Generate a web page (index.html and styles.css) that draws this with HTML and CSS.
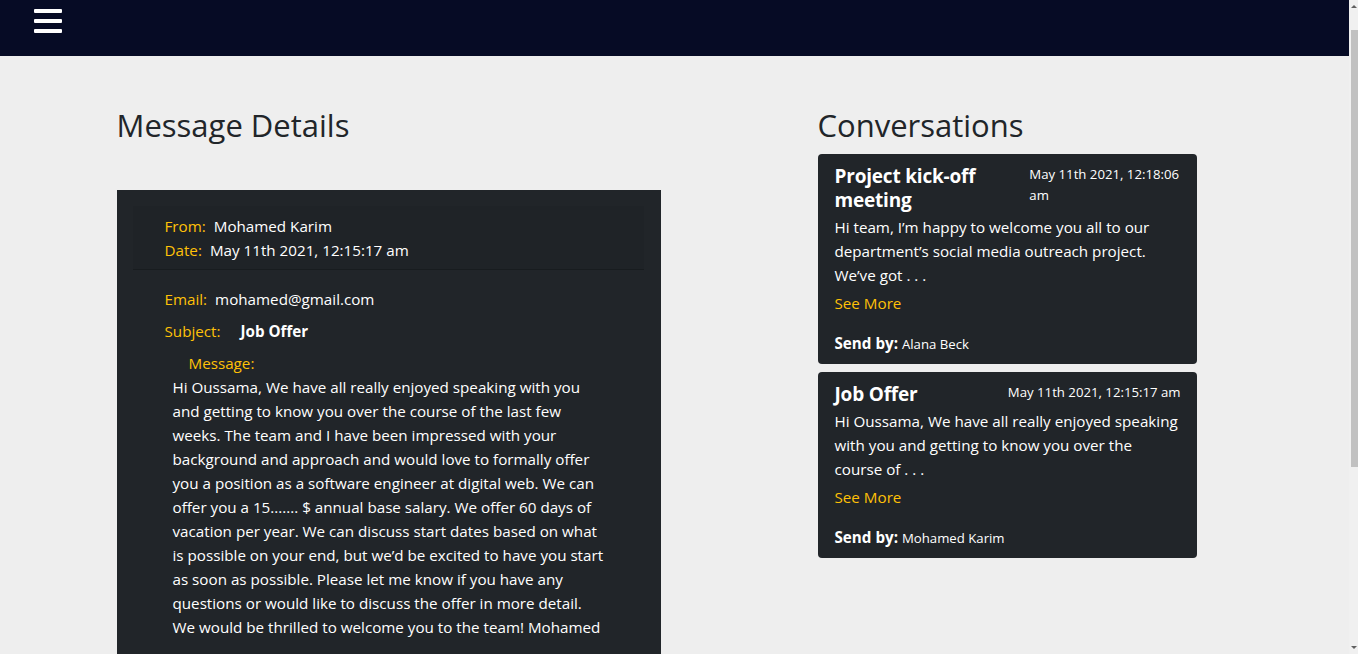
FILE: index.html
```html
<!DOCTYPE html>
<html lang="en">
<head>
<meta charset="utf-8">
<title>Message Details</title>
<link rel="stylesheet" href="styles.css">
</head>
<body>
<div class="page">
  <nav class="navbar">
    <button class="burger" aria-label="Menu">
      <span></span><span></span><span></span>
    </button>
  </nav>
  <main class="container">
    <section class="col-left">
      <h2 class="page-title title-details">Message Details</h2>
      <div class="msg-card">
        <div class="msg-header">
          <div class="field"><span class="label">From:</span><span class="value">Mohamed Karim</span></div>
          <div class="field"><span class="label">Date:</span><span class="value">May 11th 2021, 12:15:17 am</span></div>
        </div>
        <div class="msg-body">
          <div class="field row-gap"><span class="label">Email:</span><span class="value">mohamed@gmail.com</span></div>
          <div class="field row-gap"><span class="label">Subject:</span><span class="value subject">Job Offer</span></div>
          <div class="label msg-label">Message:</div>
          <p class="msg-text">Hi Oussama, We have all really enjoyed speaking with you and getting to know you over the course of the last few weeks. The team and I have been impressed with your background and approach and would love to formally offer you a position as a software engineer at digital web. We can offer you a 15....... $ annual base salary. We offer 60 days of vacation per year. We can discuss start dates based on what is possible on your end, but we’d be excited to have you start as soon as possible. Please let me know if you have any questions or would like to discuss the offer in more detail. We would be thrilled to welcome you to the team! Mohamed</p>
        </div>
      </div>
    </section>
    <section class="col-right">
      <h2 class="page-title title-conv">Conversations</h2>
      <article class="conv-card">
        <div class="conv-head">
          <h5 class="conv-title">Project kick-off meeting</h5>
          <span class="conv-date">May 11th 2021, 12:18:06 am</span>
        </div>
        <p class="conv-text">Hi team, I’m happy to welcome you all to our department’s social media outreach project. We’ve got . . .</p>
        <a class="see-more" href="#">See More</a>
        <div class="sender"><strong>Send by:</strong> <span>Alana Beck</span></div>
      </article>
      <article class="conv-card">
        <div class="conv-head">
          <h5 class="conv-title">Job Offer</h5>
          <span class="conv-date">May 11th 2021, 12:15:17 am</span>
        </div>
        <p class="conv-text">Hi Oussama, We have all really enjoyed speaking with you and getting to know you over the course of . . .</p>
        <a class="see-more" href="#">See More</a>
        <div class="sender"><strong>Send by:</strong> <span>Mohamed Karim</span></div>
      </article>
    </section>
  </main>
</div>
<aside class="scrollbar" aria-hidden="true">
  <span class="arrow arrow-up"></span>
  <span class="thumb"></span>
  <span class="arrow arrow-down"></span>
</aside>
</body>
</html>
```
FILE: styles.css
```css
* { box-sizing: border-box; }

body {
  margin: 0;
  display: flex;
  align-items: flex-start;
  background: #eeeeee;
  font-family: "Open Sans", "Noto Sans", sans-serif;
  font-size: 15.2px;
  line-height: 24px;
  color: #212529;
}

.page {
  flex: 1;
  min-width: 0;
}

/* window scrollbar */
.scrollbar {
  flex: 0 0 9px;
  position: sticky;
  top: 0;
  height: 100vh;
  background: #f0f0f0;
  display: flex;
  flex-direction: column;
  align-items: flex-end;
}
.arrow {
  display: block;
  width: 0;
  height: 0;
  border-left: 3px solid transparent;
  border-right: 3px solid transparent;
  margin-right: 1px;
}
.arrow-up {
  margin-top: 5px;
  border-bottom: 3px solid #606060;
}
.arrow-down {
  margin-top: auto;
  margin-bottom: 5px;
  border-top: 3px solid #606060;
}
.thumb {
  display: block;
  width: 7px;
  height: 437px;
  margin-top: 22px;
  background: #c1c1c1;
}

.navbar {
  height: 56px;
  background: #060b25;
  display: flex;
  align-items: flex-start;
  padding: 9px 0 0 34px;
}

.burger {
  display: flex;
  flex-direction: column;
  gap: 6px;
  padding: 0;
  border: 0;
  background: none;
  cursor: pointer;
}
.burger span {
  display: block;
  width: 28px;
  height: 4px;
  border-radius: 1px;
  background: #ffffff;
}

.container {
  width: 1140px;
  margin: 0 auto;
  padding: 50px 12px 240px;
  display: grid;
  grid-template-columns: 544px 379px;
  column-gap: 157px;
  align-items: start;
}

.page-title {
  margin: 0;
  font-size: 31px;
  line-height: 38px;
  font-weight: 500;
  color: #212529;
}
.title-details { margin-bottom: 46px; }
.title-conv { margin-bottom: 10px; }

.msg-card {
  background: #212529;
  color: #ffffff;
  padding: 16px 17px 16px 16px;
}

.msg-header {
  padding: 8px 32px 7px;
  background: rgba(0, 0, 0, 0.03);
  border-bottom: 1px solid rgba(0, 0, 0, 0.2);
}

.field { display: flex; }
.label { color: #ffc107; }
.value { margin-left: 8px; }
.value.subject { margin-left: 20px; font-weight: 700; }

.msg-body {
  padding: 17px 0 0 32px;
}
.row-gap { margin-bottom: 8px; }
.msg-label { padding-left: 24px; }
.msg-text {
  margin: 0 0 16px 8px;
  width: 433px;
}

.conv-card {
  background: #212529;
  color: #ffffff;
  border-radius: 4px;
  padding: 10px 14px 8px 17px;
  margin-bottom: 8px;
}

.conv-head {
  display: flex;
  justify-content: space-between;
  align-items: flex-start;
}
.conv-title {
  margin: 0;
  font-size: 19px;
  line-height: 24px;
  font-weight: 700;
  letter-spacing: -0.2px;
}
.conv-date {
  font-size: 13.2px;
  line-height: 21px;
  margin-right: 2px;
}

.conv-text {
  margin: 3px 0 0;
}
.see-more {
  display: block;
  margin-top: 4px;
  color: #ffc107;
  text-decoration: none;
}
.sender {
  margin-top: 16px;
}
.sender strong { font-weight: 700; }
.sender span { font-size: 13.2px; }
```
